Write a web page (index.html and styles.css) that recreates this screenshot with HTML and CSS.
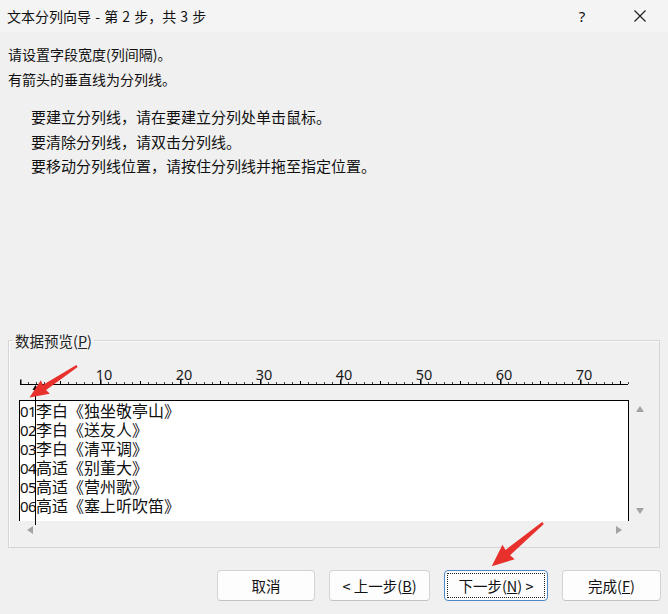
FILE: index.html
```html
<!DOCTYPE html>
<html lang="zh-CN">
<head>
<meta charset="utf-8">
<title>文本分列向导</title>
<link rel="stylesheet" href="styles.css">
</head>
<body>
<div class="window">
  <header class="titlebar">
    <span class="title">文本分列向导 - 第 2 步，共 3 步</span>
    <span class="help">?</span>
    <span class="close">
      <svg width="12" height="12" viewBox="0 0 12 12"><path d="M0.5 0.5 L11.5 11.5 M11.5 0.5 L0.5 11.5" stroke="#1a1a1a" stroke-width="1.1" fill="none"/></svg>
    </span>
  </header>

  <main class="content">
    <p class="line">请设置字段宽度(列间隔)。</p>
    <p class="line">有箭头的垂直线为分列线。</p>
    <ul class="tips">
      <li>要建立分列线，请在要建立分列处单击鼠标。</li>
      <li>要清除分列线，请双击分列线。</li>
      <li>要移动分列线位置，请按住分列线并拖至指定位置。</li>
    </ul>

    <fieldset class="group">
      <legend class="group-label">数据预览(<u>P</u>)</legend>
      <div class="preview">
        <svg class="ruler" width="612" height="24" viewBox="0 0 612 24">
          <line x1="1" y1="20.5" x2="609" y2="20.5" stroke="#000" stroke-width="1"/>
          <line x1="1" y1="19" x2="610" y2="19" stroke="#444" stroke-width="2" stroke-dasharray="1 7"/>
          <line x1="41" y1="18.5" x2="610" y2="18.5" stroke="#000" stroke-width="3" stroke-dasharray="1 79"/>
          <path d="M1.75 15.5v5M81.75 15.5v5M161.75 15.5v5M241.75 15.5v5M321.75 15.5v5M401.75 15.5v5M481.75 15.5v5M561.75 15.5v5" stroke="#000" stroke-width="1.5"/>
          <g class="ruler-nums" text-anchor="middle">
            <text x="85" y="15.5">10</text>
            <text x="165" y="15.5">20</text>
            <text x="245" y="15.5">30</text>
            <text x="325" y="15.5">40</text>
            <text x="405" y="15.5">50</text>
            <text x="485" y="15.5">60</text>
            <text x="565" y="15.5">70</text>
          </g>
        </svg>

        <div class="data">
          <div class="row"><span class="n">01</span>李白《独坐敬亭山》</div>
          <div class="row"><span class="n">02</span>李白《送友人》</div>
          <div class="row"><span class="n">03</span>李白《清平调》</div>
          <div class="row"><span class="n">04</span>高适《别董大》</div>
          <div class="row"><span class="n">05</span>高适《营州歌》</div>
          <div class="row"><span class="n">06</span>高适《塞上听吹笛》</div>
        </div>
        <div class="vscroll">
          <span class="tri tri-up"></span>
          <span class="tri tri-down"></span>
        </div>

        <div class="hscroll">
          <span class="tri tri-left"></span>
          <span class="tri tri-right"></span>
        </div>

        <svg class="break-line" width="7" height="140" viewBox="0 0 7 140">
          <path d="M3.5 0 L6.5 5 L0.5 5 Z" fill="#000"/>
          <line x1="3.5" y1="4" x2="3.5" y2="140" stroke="#000" stroke-width="1"/>
        </svg>
      </div>
    </fieldset>
  </main>

  <footer class="buttons">
    <button class="btn btn-cancel">取消</button>
    <button class="btn btn-back">&lt;&nbsp;上一步(<u>B</u>)</button>
    <button class="btn btn-next is-focused"><span class="focus-ring">下一步(<u>N</u>)&nbsp;&gt;</span></button>
    <button class="btn btn-finish">完成(<u>F</u>)</button>
  </footer>

  <svg class="annotations" width="668" height="614" viewBox="0 0 668 614">
    <g transform="translate(77 366) rotate(146.5)">
      <polygon points="0,-1.2 39,-3 38,-8 57,0 38,8 39,3 0,1.2" fill="#e8302c"/>
    </g>
    <g transform="translate(543 523) rotate(139.9)">
      <polygon points="0,-1.3 46,-3.5 45,-9.5 67,0 45,9.5 46,3.5 0,1.3" fill="#e8302c"/>
    </g>
  </svg>
</div>
</body>
</html>
```

FILE: styles.css
```css
* {
  box-sizing: border-box;
}

html, body {
  margin: 0;
  padding: 0;
}

body {
  font-family: "Noto Sans CJK SC", "Noto Sans", sans-serif;
  color: #111;
  background: #f0f0f0;
}

.window {
  position: relative;
  width: 668px;
  height: 614px;
  background: #f0f0f0;
  overflow: hidden;
}

.titlebar {
  height: 32px;
  display: flex;
  align-items: center;
  padding-left: 7px;
  background: #f4f4f4;
}

.title {
  flex: 1;
  font-size: 14px;
  word-spacing: 1px;
}

.help {
  width: 20px;
  text-align: center;
  font-family: "Noto Sans", sans-serif;
  font-size: 15px;
  margin-right: 42px;
}

.close {
  width: 12px;
  height: 12px;
  display: flex;
  margin-right: 22px;
}

.content {
  padding: 10px 0 0 0;
  font-size: 14px;
}

.line {
  margin: 0 0 0 8px;
  line-height: 25px;
}

.tips {
  list-style: none;
  margin: 13px 0 0 31px;
  padding: 0;
  font-size: 15px;
}

.tips li {
  line-height: 24.5px;
}

.group {
  margin: 152px 0 0 8px;
  width: 652px;
  padding: 0 0 8px 0;
  border: 1px solid #d6d6d6;
  box-shadow: inset 1px 1px 0 #fbfbfb;
  min-width: 0;
}

.group-label {
  margin-left: 4px;
  padding: 0 2px;
  line-height: 20px;
  font-size: 14.5px;
  color: #222;
}

.preview {
  position: relative;
  margin: 13px 0 0 10px;
  display: grid;
  grid-template-columns: 610px 22px;
  grid-template-rows: 24px 133px 18px;
}

.ruler {
  display: block;
  grid-column: 1 / 3;
}

.ruler-nums {
  font-family: "Noto Sans", sans-serif;
  font-size: 14.5px;
  fill: #1a1a1a;
}

.data {
  margin-top: 12px;
  height: 121px;
  background: #fff;
  border: 1px solid #000;
  border-bottom: none;
  font-size: 16px;
  line-height: 19.2px;
  color: #111;
  grid-row: 2;
  grid-column: 1;
}

.row {
  white-space: nowrap;
  height: 19.2px;
}

.n {
  font-family: "Noto Sans", sans-serif;
  font-size: 15px;
  letter-spacing: -0.6px;
}

.vscroll {
  grid-row: 2;
  grid-column: 2;
  margin-top: 12px;
  display: flex;
  flex-direction: column;
  justify-content: space-between;
  align-items: center;
  padding: 6px 0 7px 0;
}

.hscroll {
  grid-row: 3;
  grid-column: 1;
  display: flex;
  justify-content: space-between;
  align-items: center;
  padding: 0 7px 0 8px;
}

.tri {
  display: block;
  width: 0;
  height: 0;
  border-style: solid;
}

.tri-up {
  border-width: 0 4.5px 6px 4.5px;
  border-color: transparent transparent #a3a3a3 transparent;
}

.tri-down {
  border-width: 6px 4.5px 0 4.5px;
  border-color: #a3a3a3 transparent transparent transparent;
}

.tri-left {
  border-width: 4.5px 6px 4.5px 0;
  border-color: transparent #a3a3a3 transparent transparent;
}

.tri-right {
  border-width: 4.5px 0 4.5px 6px;
  border-color: transparent transparent transparent #a3a3a3;
}

.break-line {
  position: absolute;
  left: 13px;
  top: 21px;
}

.buttons {
  display: flex;
  justify-content: flex-end;
  gap: 14px;
  padding: 0 7px 0 0;
  margin-top: 22px;
}

.btn {
  height: 31px;
  font-family: "Noto Sans CJK SC", "Noto Sans", sans-serif;
  font-size: 14.5px;
  color: #111;
  background: #fdfdfd;
  border: 1px solid #d3d3d3;
  border-bottom-color: #c3c3c3;
  border-radius: 4px;
  padding: 0;
  display: flex;
  align-items: center;
  justify-content: center;
}

.btn-cancel { width: 98px; }
.btn-back { width: 101px; }
.btn-next { width: 104px; }
.btn-finish { width: 99px; }

.btn.is-focused {
  border: 1px solid #4c86c6;
  padding: 2px;
}

.focus-ring {
  flex: 1;
  align-self: stretch;
  display: flex;
  align-items: center;
  justify-content: center;
  border: 1px dotted #222;
  border-radius: 1px;
}

.annotations {
  position: absolute;
  left: 0;
  top: 0;
  pointer-events: none;
}
```
